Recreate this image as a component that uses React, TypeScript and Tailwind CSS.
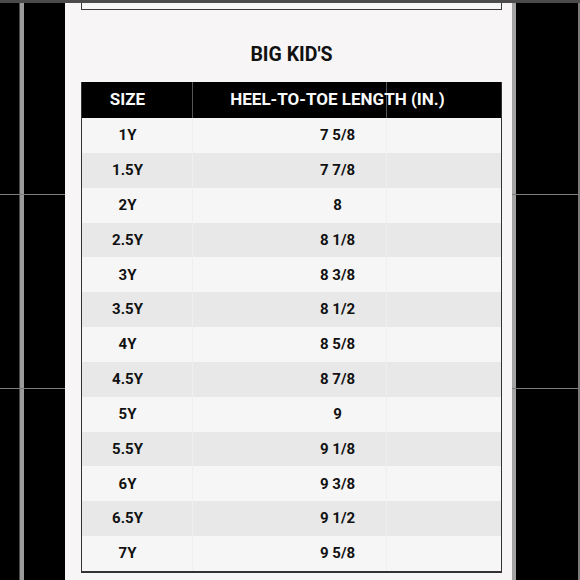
import React from 'react';

const rows: [string, string][] = [
  ['1Y', '7 5/8'],
  ['1.5Y', '7 7/8'],
  ['2Y', '8'],
  ['2.5Y', '8 1/8'],
  ['3Y', '8 3/8'],
  ['3.5Y', '8 1/2'],
  ['4Y', '8 5/8'],
  ['4.5Y', '8 7/8'],
  ['5Y', '9'],
  ['5.5Y', '9 1/8'],
  ['6Y', '9 3/8'],
  ['6.5Y', '9 1/2'],
  ['7Y', '9 5/8']
];

const LeftBand = ({ h }: { h: string }) => <div className={`flex ${h}`}>
    <div className="w-[19px]" />
    <div className="w-px bg-[#4a4a4a]" />
    <div className="w-[4px] bg-[#9b9b9b]" />
    <div className="flex-1" />
  </div>;

const RightBand = ({ h }: { h: string }) => <div className={`flex ${h}`}>
    <div className="w-[4px] bg-[#a3a3a3]" />
    <div className="flex-1" />
    <div className="w-[2px] bg-[#7c7c7c]" />
  </div>;

const App: React.FC = () => {
  return <div className="w-[580px] h-[580px] overflow-hidden bg-black flex flex-col [font-family:Roboto,sans-serif]">
      {/* top status band */}
      <div className="h-[3px] bg-[#4b4b4b] shrink-0" />
      <div className="flex flex-1">
        {/* left dark margin */}
        <div className="w-[65px] flex flex-col">
          <LeftBand h="h-[191px]" />
          <div className="h-px bg-[#7d7d7d]" />
          <LeftBand h="h-[193px]" />
          <div className="h-px bg-[#7d7d7d]" />
          <LeftBand h="flex-1" />
        </div>

        {/* page */}
        <div className="w-[447px] bg-[#f7f5f6] flex flex-col pl-[16px] pr-[10px]">
          {/* tail of the previous table */}
          <div className="h-[7px] border-x border-b border-[#3a3a3a] bg-[#f7f6f6]" />

          <h2 className="mt-[33px] h-[24px] leading-[24px] text-center text-[19.5px] font-bold text-[#111]">
            BIG KID&apos;S
          </h2>

          <div className="mt-[15px] border-x border-b-2 border-[#333]">
            <div className="grid grid-cols-[111px_193px_1fr] h-[36px] bg-black text-[#fafafa] text-[17px] font-bold">
              <div className="flex items-center justify-center pr-[19px] border-r border-[#555]">SIZE</div>
              <div className="col-start-3 row-start-1 border-l border-[#555]" />
              <div className="col-start-2 col-span-2 row-start-1 flex items-center justify-center pr-[19px]">
                HEEL-TO-TOE LENGTH (IN.)
              </div>
            </div>
            {rows.map(([size, len], i) => <div key={size} className={`grid grid-cols-[111px_193px_1fr] h-[34.85px] text-[15px] font-bold text-[#111] ${i % 2 === 0 ? 'bg-[#f7f6f6]' : 'bg-[#e8e8e8]'}`}>
                <div className="flex items-center justify-center pr-[19px] border-r border-[#efefef]">{size}</div>
                <div className="col-start-3 row-start-1 border-l border-[#efefef]" />
                <div className="col-start-2 col-span-2 row-start-1 flex items-center justify-center pr-[19px]">
                  {len}
                </div>
              </div>)}
          </div>
        </div>

        {/* right dark margin */}
        <div className="flex-1 flex flex-col">
          <RightBand h="h-[191px]" />
          <div className="h-px bg-[#7d7d7d]" />
          <RightBand h="h-[193px]" />
          <div className="h-px bg-[#7d7d7d]" />
          <RightBand h="flex-1" />
        </div>
      </div>
    </div>;
};

export default App;
